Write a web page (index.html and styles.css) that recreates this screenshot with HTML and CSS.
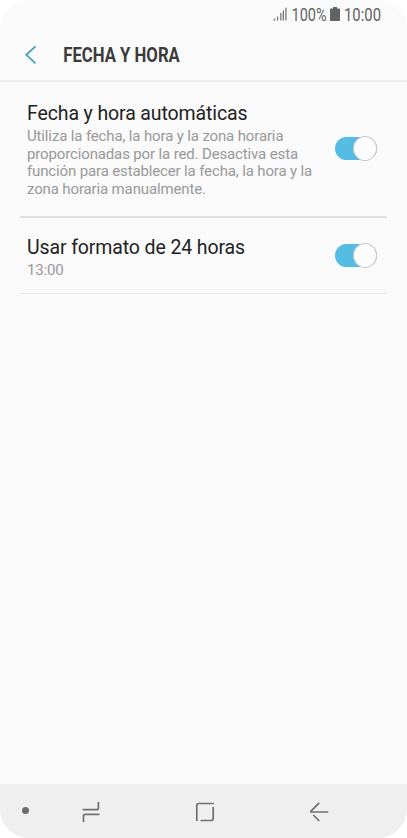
FILE: index.html
```html
<!DOCTYPE html>
<html lang="es">
<head>
<meta charset="utf-8">
<title>Fecha y hora</title>
<link rel="stylesheet" href="styles.css">
</head>
<body>
<div class="phone">
  <div class="status">
    <svg class="signal" width="14" height="14" viewBox="0 0 14 14"><path d="M0 13.5 2.4 11v2.5zM4 9.5h1.2v4H4zM7.2 6h1.3v7.5H7.2zM9.7 3.5H11v10H9.7zM12.3 .8h1.3v12.7h-1.3z"/></svg>
    <svg class="cond percent" width="37" height="24"><text x="0.5" y="18" textLength="35" lengthAdjust="spacingAndGlyphs">100%</text></svg>
    <svg class="battery" width="10" height="14" viewBox="0 0 10 14"><path d="M3 0h4v1.5h2.2q.8 0 .8.8v10.9q0 .8-.8.8H.8q-.8 0-.8-.8V2.3q0-.8.8-.8H3z"/></svg>
    <svg class="cond" width="39" height="24"><text x="0" y="18" textLength="37" lengthAdjust="spacingAndGlyphs">10:00</text></svg>
  </div>
  <header class="header">
    <svg class="back" width="12" height="20" viewBox="0 0 12 20"><path d="M10.5 1.3 1.3 9.8l9.2 8.5"/></svg>
    <svg class="heading" width="130" height="32"><text x="0.3" y="23" textLength="116.5" lengthAdjust="spacingAndGlyphs">FECHA Y HORA</text></svg>
  </header>
  <main class="content">
    <section class="row row-auto">
      <div class="copy">
        <h2>Fecha y hora automáticas</h2>
        <p>Utiliza la fecha, la hora y la zona horaria<br>proporcionadas por la red. Desactiva esta<br>función para establecer la fecha, la hora y la<br>zona horaria manualmente.</p>
      </div>
      <div class="switch"><span class="knob"></span></div>
    </section>
    <section class="row row-format">
      <div class="copy">
        <h2>Usar formato de 24 horas</h2>
        <p>13:00</p>
      </div>
      <div class="switch"><span class="knob"></span></div>
    </section>
  </main>
  <nav class="nav">
    <span class="dot"></span>
    <svg class="recents" width="20" height="22" viewBox="0 0 20 22"><path d="M.6 8.7h13.8q2 0 2-2V1M17.5 13.3H3.5q-2 0-2 2V21"/></svg>
    <svg class="home" width="20" height="20" viewBox="0 0 20 20"><path d="M1.8 19V3.5q0-2 2-2H19M18.2 5v11.5q0 2-2 2H5.5"/></svg>
    <svg class="return" width="20" height="20" viewBox="0 0 20 20"><path d="M10.2 .9 2 9.2v.8H19.2M4.3 13l5.9 6"/></svg>
  </nav>
</div>
</body>
</html>
```
FILE: styles.css
```css
body {
  margin: 0;
  background: #fff;
  font-family: Roboto, "Liberation Sans", sans-serif;
}
.phone {
  width: 407px;
  height: 838px;
  display: flex;
  flex-direction: column;
  overflow: hidden;
  border-radius: 29px;
  background: #fafafa;
}
svg { display: block; flex: none; overflow: visible; }
.status {
  height: 30px;
  box-sizing: border-box;
  padding: 3px 24px 0 0;
  display: flex;
  justify-content: flex-end;
  align-items: flex-start;
  fill: #626262;
}
.signal { margin: 4px 4px 0 0; fill: #777; }
.battery { margin: 4px 4px 0 2px; }
.cond { font-size: 17.5px; }
.header {
  height: 52px;
  box-sizing: border-box;
  padding-left: 25px;
  display: flex;
  align-items: center;
  border-bottom: 2px solid #ededed;
}
.back { fill: none; stroke: #469fc2; stroke-width: 1.8; }
.heading { margin-left: 26px; font-size: 20px; font-weight: 700; fill: #3b3b3b; }
.content { flex: 1; padding: 0 20px; }
.row {
  box-sizing: border-box;
  display: flex;
  justify-content: space-between;
  align-items: flex-start;
  padding: 0 10px 0 7px;
}
.row-auto { height: 136px; padding-top: 20px; border-bottom: 2px solid #e0e0e0; }
.row-format { height: 76px; padding-top: 17px; border-bottom: 1px solid #e6e6e6; }
.copy { white-space: nowrap; }
h2 {
  margin: 0;
  font-size: 19.5px;
  line-height: 24px;
  letter-spacing: -0.12px;
  font-weight: 400;
  color: #222;
}
.row-format h2 { padding-top: 1px; }
p {
  margin: 2px 0 0;
  font-size: 15px;
  line-height: 17.5px;
  letter-spacing: -0.14px;
  color: #999;
}
.switch {
  box-sizing: border-box;
  width: 42.5px;
  height: 23px;
  border-radius: 12px;
  background: #55bde3;
  display: flex;
  justify-content: flex-end;
  align-items: center;
}
.row-auto .switch { margin-top: 35px; }
.row-format .switch { margin-top: 9px; }
.knob {
  box-sizing: border-box;
  flex: none;
  width: 24px;
  height: 25px;
  border: 1px solid #c6c6c6;
  border-radius: 50%;
  background: #fcfcfc;
}
.nav {
  height: 54px;
  display: flex;
  align-items: flex-start;
  background: #efefef;
}
.nav svg { fill: none; stroke: #707070; stroke-width: 1.7; }
.dot { width: 7px; height: 7px; margin: 23px 0 0 22px; border-radius: 50%; background: #6c6c6c; }
.recents { margin: 17px 0 0 53px; }
.home { margin: 18px 0 0 93px; }
.return { margin: 18px 0 0 94px; }
```
